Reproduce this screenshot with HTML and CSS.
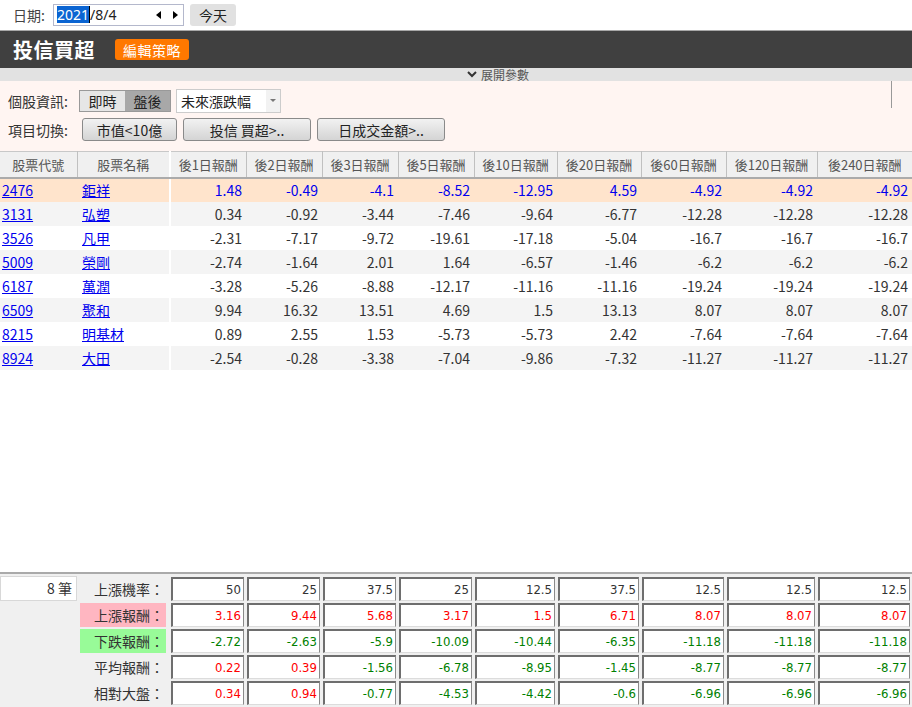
FILE: index.html
```html
<!DOCTYPE html>
<html lang="zh-Hant">
<head>
<meta charset="utf-8">
<title>投信買超</title>
<link rel="stylesheet" href="styles.css">
</head>
<body>
<div class="topbar">
  <span class="lbl">日期:</span>
  <div class="dateinput">
    <span class="sel">2021</span><span class="caret"></span><span>/8/4</span>
    <span class="arrows">
      <svg width="6" height="8" viewBox="0 0 6 8"><path d="M5 0 L0 4 L5 8 Z" fill="#000"/></svg>
      <svg width="6" height="8" viewBox="0 0 6 8"><path d="M1 0 L6 4 L1 8 Z" fill="#000"/></svg>
    </span>
  </div>
  <button class="today">今天</button>
</div>

<div class="header">
  <span class="title">投信買超</span>
  <span class="editbtn">編輯策略</span>
</div>

<div class="expander">
  <svg width="10" height="7" viewBox="0 0 10 7"><path d="M1 1 L5 5 L9 1" stroke="#333" stroke-width="2" fill="none"/></svg>
  <span class="exptext">展開參數</span>
</div>

<div class="params">
  <div class="prow">
    <span class="plbl">個股資訊:</span>
    <div class="toggle"><span class="t-off">即時</span><span class="t-on">盤後</span></div>
    <div class="select"><span class="seltext">未來漲跌幅</span><span class="selarrow"><svg width="6" height="4" viewBox="0 0 6 4"><path d="M0 0 L6 0 L3 3 Z" fill="#777"/></svg></span></div>
    <span class="vline"></span>
  </div>
  <div class="prow prow2">
    <span class="plbl">項目切換:</span>
    <span class="gbtn b1">市值&lt;10億</span>
    <span class="gbtn b2">投信 買超&gt;..</span>
    <span class="gbtn b3">日成交金額&gt;..</span>
  </div>
</div>

<div class="tablearea">
<table class="grid">
  <colgroup>
    <col style="width:77px"><col style="width:93px">
    <col style="width:76px"><col style="width:76px"><col style="width:76px"><col style="width:76px">
    <col style="width:83px"><col style="width:84px"><col style="width:85px"><col style="width:91px"><col style="width:95px">
  </colgroup>
  <thead>
    <tr><th>股票代號</th><th class="split">股票名稱</th><th>後1日報酬</th><th>後2日報酬</th><th>後3日報酬</th><th>後5日報酬</th><th>後10日報酬</th><th>後20日報酬</th><th>後60日報酬</th><th>後120日報酬</th><th>後240日報酬</th></tr>
  </thead>
  <tbody>
    <tr class="hl"><td class="code"><a href="#">2476</a></td><td class="name split"><a href="#">鉅祥</a></td><td>1.48</td><td>-0.49</td><td>-4.1</td><td>-8.52</td><td>-12.95</td><td>4.59</td><td>-4.92</td><td>-4.92</td><td>-4.92</td></tr>
    <tr class="alt"><td class="code"><a href="#">3131</a></td><td class="name split"><a href="#">弘塑</a></td><td>0.34</td><td>-0.92</td><td>-3.44</td><td>-7.46</td><td>-9.64</td><td>-6.77</td><td>-12.28</td><td>-12.28</td><td>-12.28</td></tr>
    <tr><td class="code"><a href="#">3526</a></td><td class="name split"><a href="#">凡甲</a></td><td>-2.31</td><td>-7.17</td><td>-9.72</td><td>-19.61</td><td>-17.18</td><td>-5.04</td><td>-16.7</td><td>-16.7</td><td>-16.7</td></tr>
    <tr class="alt"><td class="code"><a href="#">5009</a></td><td class="name split"><a href="#">榮剛</a></td><td>-2.74</td><td>-1.64</td><td>2.01</td><td>1.64</td><td>-6.57</td><td>-1.46</td><td>-6.2</td><td>-6.2</td><td>-6.2</td></tr>
    <tr><td class="code"><a href="#">6187</a></td><td class="name split"><a href="#">萬潤</a></td><td>-3.28</td><td>-5.26</td><td>-8.88</td><td>-12.17</td><td>-11.16</td><td>-11.16</td><td>-19.24</td><td>-19.24</td><td>-19.24</td></tr>
    <tr class="alt"><td class="code"><a href="#">6509</a></td><td class="name split"><a href="#">聚和</a></td><td>9.94</td><td>16.32</td><td>13.51</td><td>4.69</td><td>1.5</td><td>13.13</td><td>8.07</td><td>8.07</td><td>8.07</td></tr>
    <tr><td class="code"><a href="#">8215</a></td><td class="name split"><a href="#">明基材</a></td><td>0.89</td><td>2.55</td><td>1.53</td><td>-5.73</td><td>-5.73</td><td>2.42</td><td>-7.64</td><td>-7.64</td><td>-7.64</td></tr>
    <tr class="alt"><td class="code"><a href="#">8924</a></td><td class="name split"><a href="#">大田</a></td><td>-2.54</td><td>-0.28</td><td>-3.38</td><td>-7.04</td><td>-9.86</td><td>-7.32</td><td>-11.27</td><td>-11.27</td><td>-11.27</td></tr>
  </tbody>
</table>
</div>

<div class="summary">
  <div class="srow">
    <div class="count">8 筆</div>
    <div class="slbl">上漲機率：</div>
    <div class="box">50</div><div class="box">25</div><div class="box">37.5</div><div class="box">25</div><div class="box">12.5</div><div class="box">37.5</div><div class="box">12.5</div><div class="box">12.5</div><div class="box">12.5</div>
  </div>
  <div class="srow">
    <div></div>
    <div class="slbl pink">上漲報酬：</div>
    <div class="box r">3.16</div><div class="box r">9.44</div><div class="box r">5.68</div><div class="box r">3.17</div><div class="box r">1.5</div><div class="box r">6.71</div><div class="box r">8.07</div><div class="box r">8.07</div><div class="box r">8.07</div>
  </div>
  <div class="srow">
    <div></div>
    <div class="slbl green">下跌報酬：</div>
    <div class="box g">-2.72</div><div class="box g">-2.63</div><div class="box g">-5.9</div><div class="box g">-10.09</div><div class="box g">-10.44</div><div class="box g">-6.35</div><div class="box g">-11.18</div><div class="box g">-11.18</div><div class="box g">-11.18</div>
  </div>
  <div class="srow">
    <div></div>
    <div class="slbl">平均報酬：</div>
    <div class="box r">0.22</div><div class="box r">0.39</div><div class="box g">-1.56</div><div class="box g">-6.78</div><div class="box g">-8.95</div><div class="box g">-1.45</div><div class="box g">-8.77</div><div class="box g">-8.77</div><div class="box g">-8.77</div>
  </div>
  <div class="srow">
    <div></div>
    <div class="slbl">相對大盤：</div>
    <div class="box r">0.34</div><div class="box r">0.94</div><div class="box g">-0.77</div><div class="box g">-4.53</div><div class="box g">-4.42</div><div class="box g">-0.6</div><div class="box g">-6.96</div><div class="box g">-6.96</div><div class="box g">-6.96</div>
  </div>
</div>
</body>
</html>
```

FILE: styles.css
```css
* { box-sizing: border-box; }
html, body { margin: 0; padding: 0; }
body {
  width: 912px;
  height: 707px;
  overflow: hidden;
  background: #fff;
  font-family: "Noto Sans CJK TC", "Noto Sans", sans-serif;
  color: #333;
  font-size: 14px;
}

/* top bar */
.topbar {
  height: 30px;
  display: flex;
  align-items: center;
  padding-left: 13px;
  padding-bottom: 1px;
}
.lbl { font-size: 14px; color: #444; line-height: 1; }
.dateinput {
  margin-left: 8px;
  width: 131px;
  height: 22px;
  border: 1px solid #b4b8cc;
  display: flex;
  align-items: center;
  padding-left: 3px;
  font-size: 14px;
  font-family: "Noto Sans", "Noto Sans CJK TC", sans-serif;
  color: #222;
}
.dateinput .sel { background: #0a64d2; color: #fff; line-height: 17px; }
.dateinput .caret { width: 1px; height: 17px; background: #000; }
.arrows {
  margin-left: auto;
  margin-right: 5px;
  display: flex;
  gap: 10px;
  align-items: center;
}
.arrows svg { display: block; }
.today {
  margin-left: 6px;
  width: 46px;
  height: 22px;
  border: none;
  border-radius: 3px;
  background: #e1e1e1;
  font-family: "Noto Sans CJK TC", sans-serif;
  font-size: 14px;
  color: #222;
  padding: 0;
}

/* header */
.header {
  height: 38px;
  border-top: 1px solid #a8a8a8;
  background: #404040;
  display: flex;
  align-items: center;
  padding-left: 13px;
}
.title {
  color: #fff;
  font-size: 20px;
  font-weight: bold;
  letter-spacing: 0.5px;
}
.editbtn {
  margin-left: 20px;
  background: #ff7800;
  color: #fff;
  font-size: 14px;
  height: 21px;
  width: 74px;
  border-radius: 3px;
  display: flex;
  align-items: center;
  justify-content: center;
  letter-spacing: 0.5px;
}

/* expander */
.expander {
  height: 13px;
  background: #e2e2e2;
  display: flex;
  align-items: center;
  padding-left: 467px;
  gap: 4px;
}
.expander svg { display: block; }
.exptext {
  font-size: 12px;
  line-height: 12px;
  color: #555;
}

/* params */
.params {
  background: #fff5f2;
  height: 70px;
  padding-top: 8px;
  padding-left: 8px;
}
.prow {
  display: flex;
  align-items: center;
  height: 23px;
  position: relative;
}
.prow2 { margin-top: 6px; }
.plbl { font-size: 14px; color: #333; width: 70px; }
.toggle {
  display: flex;
  height: 22px;
  border: 1px solid #999;
  margin-left: 1px;
}
.toggle span {
  width: 45px;
  display: flex;
  align-items: center;
  justify-content: center;
  font-size: 14px;
  color: #222;
}
.t-off { background: #e6e6e6; }
.t-on { background: #a8a8a8; }
.select {
  margin-left: 5px;
  width: 105px;
  height: 24px;
  background: #fff;
  border: 1px solid #ccc;
  display: flex;
  align-items: stretch;
}
.seltext { flex: 1; padding-left: 4px; display: flex; align-items: center; font-size: 14px; color: #222; }
.selarrow { width: 14px; background: #f2f2f2; display: flex; align-items: center; justify-content: center; }
.vline {
  position: absolute;
  left: 883px;
  top: -8px;
  width: 1px;
  height: 27px;
  background: #999;
}
.gbtn {
  height: 23px;
  border: 1px solid #8a8a8a;
  border-radius: 3px;
  background: linear-gradient(#f2f2f2, #d4d4d4);
  display: flex;
  align-items: center;
  justify-content: center;
  font-size: 14px;
  color: #222;
}
.b1 { margin-left: 4px; width: 95px; }
.b2 { margin-left: 6px; width: 128px; }
.b3 { margin-left: 6px; width: 128px; }

/* main table */
.tablearea {
  height: 421px;
}
.grid {
  width: 912px;
  border-collapse: collapse;
  table-layout: fixed;
}
.grid th {
  height: 26px;
  background: #f0f0f0;
  border-top: 1px solid #c8c8c8;
  border-right: 1px solid #c0c0c0;
  border-bottom: 2px solid #ababab;
  font-weight: normal;
  font-size: 13px;
  color: #555;
  padding: 0;
  text-align: center;
}
.grid th:last-child { border-right: none; }
.grid td {
  height: 24px;
  padding: 0 4px 0 0;
  text-align: right;
  font-size: 14px;
  color: #333;
  white-space: nowrap;
}
.grid td.code { text-align: left; padding-left: 2px; }
.grid td.name { text-align: left; padding-left: 5px; }
.grid .split { border-right: 2px solid #fff; }
.grid a { color: #0000ee; text-decoration: underline; }
.grid tr.alt td { background: #f4f4f4; }
.grid tr.hl td { background: #ffe4cc; color: #0000ee; }

/* summary */
.summary {
  border-top: 2px solid #aaa;
  background: #f0f0f0;
  height: 136px;
  padding-top: 1px;
}
.srow {
  display: grid;
  grid-template-columns: 77px 93px 76px 76px 76px 76px 83px 84px 85px 91px 95px;
  height: 26px;
  padding-top: 2px;
}
.count {
  width: 77px;
  height: 25px;
  margin-top: -1px;
  background: #fff;
  border: 1px solid #d8d8d8;
  text-align: right;
  padding-right: 4px;
  font-size: 14px;
  color: #333;
  line-height: 23px;
}
.slbl {
  margin-left: 3px;
  width: 86px;
  height: 24px;
  text-align: right;
  padding-right: 2px;
  font-size: 14px;
  color: #333;
  line-height: 24px;
}
.pink { background: #ffb6c1; }
.green { background: #98fb98; }
.box {
  margin: 0 2px 0 1px;
  height: 24px;
  background: #fff;
  border-top: 2px solid #6e6e6e;
  border-left: 2px solid #6e6e6e;
  border-right: 1px solid #8a8a8a;
  border-bottom: 1px solid #dcdcdc;
  text-align: right;
  padding-right: 2px;
  font-family: "DejaVu Sans Condensed", "DejaVu Sans", sans-serif;
  font-size: 13px;
  line-height: 21px;
  color: #333;
}
.box.r { color: #ff0000; }
.box.g { color: #008000; }
```
